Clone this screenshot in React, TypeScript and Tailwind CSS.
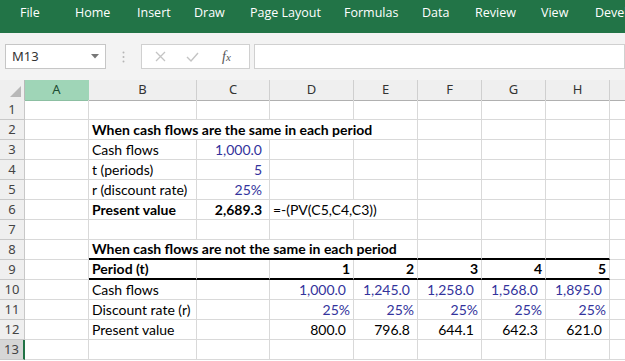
import React from 'react';

const tabs: [string, number][] = [
  ['File', 55],
  ['Home', 62],
  ['Insert', 57],
  ['Draw', 56],
  ['Page Layout', 94],
  ['Formulas', 78],
  ['Data', 53],
  ['Review', 66],
  ['View', 54],
  ['Developer', 80],
];
const cols = ['A', 'B', 'C', 'D', 'E', 'F', 'G', 'H', ''];
const gridCols = 'grid grid-cols-[25px_64px_108px_73px_84px_64px_64px_64px_64px_64px]';

const cellFont = { fontFamily: 'Lato, "Open Sans", sans-serif' };
const blue = 'text-[#33339c]';

type Cell = {
  text?: string;
  span?: number;
  align?: 'l' | 'r';
  bold?: boolean;
  blue?: boolean;
  pr?: string;
  thick?: boolean;
};

function RowHeader({ n, active }: { n: number; active?: boolean }) {
  return (
    <div
      className={`h-[20px] flex items-center justify-center border-b border-r text-[13px] text-[#444] ${
        active ? 'bg-[#d6d6d6] border-r-2 border-r-[#217346] border-b-[#c8c8c8]' : 'bg-[#efefef] border-[#c8c8c8]'
      }`}
      style={{ fontFamily: '"Noto Sans", sans-serif' }}
    >
      {n}
    </div>
  );
}

function Row({ n, cells, active }: { n: number; cells: Cell[]; active?: boolean }) {
  const filled: Cell[] = [];
  let used = 0;
  cells.forEach(c => {
    filled.push(c);
    used += c.span || 1;
  });
  while (used < 9) {
    filled.push({});
    used++;
  }
  return (
    <div className={gridCols}>
      <RowHeader n={n} active={active} />
      {filled.map((c, i) => {
        const span = c.span === 4 ? 'col-span-4' : c.span === 2 ? 'col-span-2' : '';
        return (
          <div
            key={i}
            className={`h-[20px] flex items-center whitespace-nowrap overflow-hidden border-r border-[#d9d9d9] text-[14px] leading-none ${span} ${
              c.thick ? 'border-b-2 border-b-black' : 'border-b'
            } ${c.align === 'r' ? `justify-end ${c.pr || 'pr-[7px]'}` : 'pl-[3px]'} ${c.bold ? 'font-bold text-black' : c.blue ? blue : 'text-black'}`}
            style={cellFont}
          >
            {c.text}
          </div>
        );
      })}
    </div>
  );
}

export default function App() {
  const pv = [800.0, 796.8, 644.1, 642.3, 621.0].map(v => v.toFixed(1));
  const cf = ['1,000.0', '1,245.0', '1,258.0', '1,568.0', '1,895.0'];

  return (
    <div className="w-[625px] h-[361px] overflow-hidden bg-white">
      {/* Ribbon tabs */}
      <div className="h-[33px] bg-[#227447] flex items-start pt-[4px] pl-[20px] text-white text-[12.5px] whitespace-nowrap overflow-hidden" style={{ fontFamily: '"Open Sans", sans-serif' }}>
        {tabs.map(([t, w]) => (
          <span key={t} className="shrink-0" style={{ width: w }}>{t}</span>
        ))}
      </div>

      {/* Formula bar */}
      <div className="h-[47px] bg-[#f3f3f3] flex items-center pl-[5px] gap-[4px]">
        <div className="w-[101px] h-[25px] bg-white border border-[#c6c6c6] flex items-center justify-between pl-[6px] pr-[6px] text-[13px] text-[#333]" style={{ fontFamily: '"Noto Sans", sans-serif' }}>
          <span>M13</span>
          <svg width="8" height="5" viewBox="0 0 8 5"><path d="M0 0h8L4 4.5z" fill="#777" /></svg>
        </div>
        <div className="w-[27px] flex justify-center">
          <svg width="3" height="12" viewBox="0 0 3 12">
            <circle cx="1.5" cy="1.5" r="1" fill="#b5b5b5" />
            <circle cx="1.5" cy="6" r="1" fill="#b5b5b5" />
            <circle cx="1.5" cy="10.5" r="1" fill="#b5b5b5" />
          </svg>
        </div>
        <div className="w-[109px] h-[25px] bg-white border border-[#d0d0d0] flex items-center">
          <svg className="ml-[13px]" width="11" height="11" viewBox="0 0 11 11">
            <path d="M1 1l9 9M10 1l-9 9" stroke="#c4c4c4" strokeWidth="1.3" />
          </svg>
          <svg className="ml-[20px]" width="13" height="10" viewBox="0 0 13 10">
            <path d="M1 5l4 4 7-8" stroke="#c4c4c4" strokeWidth="1.4" fill="none" />
          </svg>
          <span className="ml-[23px] text-[14px] italic text-[#555]" style={{ fontFamily: '"Liberation Serif", serif' }}>
            f<span className="text-[11px]">x</span>
          </span>
        </div>
        <div className="flex-1 h-[25px] bg-white border border-[#d0d0d0]" />
      </div>

      {/* Column headers */}
      <div className={`${gridCols} h-[20px]`} style={{ fontFamily: '"Noto Sans", sans-serif' }}>
        <div className="bg-[#efefef] border-b border-r border-[#b9b9b9] flex items-end justify-end pr-[3px] pb-[3px]">
          <svg width="11" height="11" viewBox="0 0 11 11"><path d="M11 0v11H0z" fill="#b8b8b8" /></svg>
        </div>
        {cols.map((c, i) => (
          <div
            key={i}
            className={`flex items-center justify-center text-[13px] border-r border-b ${
              c === 'A' ? 'bg-[#9fd5b7] text-[#1d4d33] border-r-[#9fd5b7] border-b-[#8cbfa2]' : 'bg-[#efefef] text-[#333] border-r-[#cfcfcf] border-b-[#b0b0b0]'
            }`}
          >
            {c}
          </div>
        ))}
      </div>

      {/* Sheet */}
      <Row n={1} cells={[]} />
      <Row n={2} cells={[{}, { text: 'When cash flows are the same in each period', bold: true, span: 4 }]} />
      <Row n={3} cells={[{}, { text: 'Cash flows' }, { text: '1,000.0', align: 'r', blue: true }]} />
      <Row n={4} cells={[{}, { text: 't (periods)' }, { text: '5', align: 'r', blue: true }]} />
      <Row n={5} cells={[{}, { text: 'r (discount rate)' }, { text: '25%', align: 'r', blue: true }]} />
      <Row n={6} cells={[{}, { text: 'Present value', bold: true }, { text: '2,689.3', align: 'r', bold: true }, { text: '=-(PV(C5,C4,C3))', span: 2 }]} />
      <Row n={7} cells={[]} />
      <Row n={8} cells={[{}, { text: 'When cash flows are not the same in each period', bold: true, span: 4, thick: true }, { thick: true }, { thick: true }, { thick: true }]} />
      <Row
        n={9}
        cells={[
          {},
          { text: 'Period (t)', bold: true, thick: true },
          { thick: true },
          ...['1', '2', '3', '4', '5'].map(t => ({ text: t, align: 'r' as const, bold: true, thick: true, pr: 'pr-[3px]' })),
        ]}
      />
      <Row n={10} cells={[{}, { text: 'Cash flows' }, {}, ...cf.map(t => ({ text: t, align: 'r' as const, blue: true }))]} />
      <Row n={11} cells={[{}, { text: 'Discount rate (r)' }, {}, ...cf.map(() => ({ text: '25%', align: 'r' as const, blue: true, pr: 'pr-[3px]' }))]} />
      <Row n={12} cells={[{}, { text: 'Present value' }, {}, ...pv.map(t => ({ text: t, align: 'r' as const }))]} />
      <Row n={13} cells={[]} active />
    </div>
  );
}
